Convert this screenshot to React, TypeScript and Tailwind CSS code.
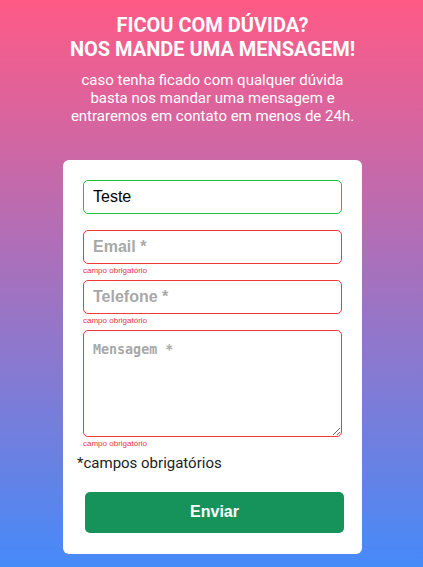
import React, { useState } from 'react';

const App: React.FC = () => {
  const [nome, setNome] = useState('Teste');

  return (
    <div className="min-h-screen w-full bg-[linear-gradient(to_bottom,#ff5a86,#468af9)] pt-[13px] pb-[13px] pl-[2px] font-['Roboto',sans-serif]">
      {/* Header */}
      <div className="text-center text-white">
        <h1 className="text-[20px] leading-[24px] font-bold">
          FICOU COM DÚVIDA?
          <br />
          NOS MANDE UMA MENSAGEM!
        </h1>
        <p className="mt-[10px] text-[15px] leading-[18px]">
          caso tenha ficado com qualquer dúvida
          <br />
          basta nos mandar uma mensagem e
          <br />
          entraremos em contato em menos de 24h.
        </p>
      </div>

      {/* Form card */}
      <div className="mt-[35px] mx-auto w-[299px] bg-white rounded-[6px] pt-[20px] pb-[21px] px-[20px]">
        <input
          value={nome}
          onChange={(e) => setNome(e.target.value)}
          className="block w-full h-[34px] rounded-[5px] border border-[#1ec23b] px-[9px] text-[16px] text-black font-['Liberation_Sans',Arial,sans-serif] outline-none"
        />
        <div className="h-4" />

        <input
          placeholder="Email *"
          className="block w-full h-[34px] rounded-[5px] border border-[#f03a3a] px-[9px] text-[16px] font-['Liberation_Sans',Arial,sans-serif] placeholder:font-bold placeholder:text-[#a8a8a8] outline-none"
        />
        <div className="h-4 pt-[2px] text-[8px] leading-[9px] text-[#ec3347] font-['Liberation_Sans',Arial,sans-serif]">
          campo obrigatório
        </div>

        <input
          placeholder="Telefone *"
          className="block w-full h-[34px] rounded-[5px] border border-[#f03a3a] px-[9px] text-[16px] font-['Liberation_Sans',Arial,sans-serif] placeholder:font-bold placeholder:text-[#a8a8a8] outline-none"
        />
        <div className="h-4 pt-[2px] text-[8px] leading-[9px] text-[#ec3347] font-['Liberation_Sans',Arial,sans-serif]">
          campo obrigatório
        </div>

        <textarea
          placeholder="Mensagem *"
          className="block w-full h-[107px] rounded-[5px] border border-[#f03a3a] px-[9px] pt-[9px] text-[13.33px] font-['DejaVu_Sans_Mono',monospace] placeholder:font-bold placeholder:text-[#a8a8a8] outline-none"
        />
        <div className="pt-[2px] text-[8px] leading-[9px] text-[#ec3347] font-['Liberation_Sans',Arial,sans-serif]">
          campo obrigatório
        </div>

        <p className="mt-[7px] -ml-[6px] text-[15px] leading-[17.5px] text-[#222]">*campos obrigatórios</p>

        <button className="mt-[19px] ml-[2px] block w-[259px] h-[41px] rounded-[5px] bg-[#16935a] text-white text-[16px] font-bold font-['Liberation_Sans',Arial,sans-serif]">
          Enviar
        </button>
      </div>
    </div>
  );
};

export default App;
